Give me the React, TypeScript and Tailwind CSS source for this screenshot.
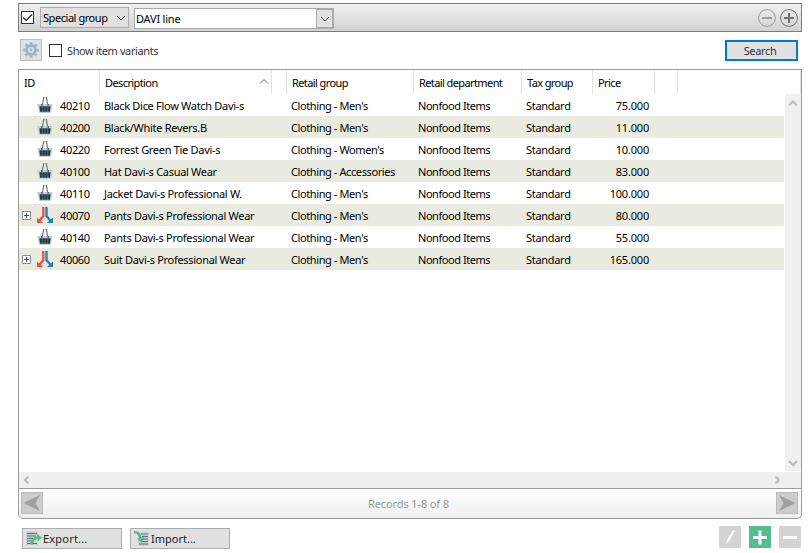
import React from 'react';

type Row = { id: string; name: string; group: string; price: string; variants?: boolean };

const rows: Row[] = [
  { id: '40210', name: 'Black Dice Flow Watch Davi-s', group: "Clothing - Men's", price: '75.000' },
  { id: '40200', name: 'Black/White Revers.B', group: "Clothing - Men's", price: '11.000' },
  { id: '40220', name: 'Forrest Green Tie Davi-s', group: "Clothing - Women's", price: '10.000' },
  { id: '40100', name: 'Hat Davi-s Casual Wear', group: 'Clothing - Accessories', price: '83.000' },
  { id: '40110', name: 'Jacket Davi-s Professional W.', group: "Clothing - Men's", price: '100.000' },
  { id: '40070', name: 'Pants Davi-s Professional Wear', group: "Clothing - Men's", price: '80.000', variants: true },
  { id: '40140', name: 'Pants Davi-s Professional Wear', group: "Clothing - Men's", price: '55.000' },
  { id: '40060', name: 'Suit Davi-s Professional Wear', group: "Clothing - Men's", price: '165.000', variants: true },
];

const Chevron = ({ dir, className }: { dir: 'up' | 'down' | 'left' | 'right'; className: string }) => {
  const d = { up: 'M1 6.5 5 2.5 9 6.5', down: 'M1 3 5 7 9 3', left: 'M6.5 1.5 3 5 6.5 8.5', right: 'M3.5 1.5 7 5 3.5 8.5' }[dir];
  return (
    <svg viewBox="0 0 10 10" className={'block h-[10px] w-[10px] shrink-0 ' + className} fill="none" stroke="currentColor">
      <path d={d} />
    </svg>
  );
};

const Basket = () => (
  <svg viewBox="0 0 16 16" className="block h-4 w-4">
    <path d="M5.3 8.5 6.6 1M10.7 8.5 9.4 1" stroke="#5b686e" strokeWidth="1.1" fill="none" />
    <path d="M6 .6h1.6M8.6.6h1.6" stroke="#6d797f" />
    <path d="M.3 7h15.2v2.2H.3z" fill="#c3cdd2" />
    <path d="M4 7h1.6v2H4zM10.4 7H12v2h-1.6z" fill="#5b686e" />
    <path d="M1 9h14l-1 7H2z" fill="#c3cdd2" />
    <path d="M2.4 9.2h11.2l-.7 5.6H3z" fill="#283a42" />
    <path d="M5.3 9v6M8 9v6M10.7 9v6" stroke="#71828a" strokeWidth=".6" />
  </svg>
);

const Split = () => (
  <svg viewBox="0 0 16 16" className="block h-4 w-4">
    <path d="M6.3 0v9L2.5 13.5" fill="none" stroke="#f04e3e" strokeWidth="2.3" />
    <path d="M0 10.5V16h6z" fill="#f04e3e" />
    <path d="M9.5 0v9l3.8 4.5" fill="none" stroke="#1f80b5" strokeWidth="2.3" />
    <path d="M16 10.5V16h-6z" fill="#1f80b5" />
  </svg>
);

const Gear = () => (
  <svg viewBox="0 0 16 16" className="block h-4 w-4">
    <circle cx="8" cy="8" r="5.9" fill="#a5b0b8" />
    <circle cx="8" cy="8" r="6.7" fill="none" stroke="#a5b0b8" strokeWidth="2.2" strokeDasharray="2.9 2.36" strokeDashoffset="1.45" />
    <circle cx="8" cy="8" r="3" fill="#e1e1e1" />
    <circle cx="8" cy="8" r="1.4" fill="#a5b0b8" />
  </svg>
);

const Doc = ({ out }: { out?: boolean }) => (
  <svg viewBox="0 0 16 15" className="block h-[15px] w-4">
    <path d={out ? 'M0 0h12v14H0z' : 'M4 1h11v14H4z'} fill="#cbd0d2" />
    <path d={out ? 'M1 2.5h10M1 5h9M1 7.5h7M1 10h5M1 12.5h10' : 'M7 3h7M8 5.5h6M9 8h5M7 10.5h7M5 13h9'} stroke="#5c6c75" strokeWidth="1.1" />
    {out ? (
      <>
        <path d="M5.5 13.5C6 9 8 7 12 6.5" fill="none" stroke="#52be8b" strokeWidth="2.5" />
        <path d="m11 3 5 3.5-4 4z" fill="#52be8b" />
      </>
    ) : (
      <>
        <path d="M0 1.3C4 1 6 3 6.5 8" fill="none" stroke="#52be8b" strokeWidth="2.5" />
        <path d="M3 7.5 10 6 8 12.5z" fill="#52be8b" />
      </>
    )}
  </svg>
);

const Check = ({ on }: { on?: boolean }) => (
  <span className="block h-[13px] w-[13px] shrink-0 border border-[#333] bg-white">
    {on && (
      <svg viewBox="0 0 11 11" className="block h-[11px] w-[11px]">
        <path d="M1.2 5.5 4.2 8.5 10 2.5" fill="none" stroke="#222" strokeWidth="1.2" />
      </svg>
    )}
  </span>
);

const Nav = ({ right }: { right?: boolean }) => (
  <span className="block h-[22px] w-[22px] border border-[#bcbcbc] bg-[#cccccc]">
    <svg viewBox="0 0 20 20" className="block h-5 w-5">
      <path d={right ? 'M2 2 18.5 10 2 18 6.5 10z' : 'M18 2 1.5 10 18 18 13.5 10z'} fill="#a0a0a0" />
    </svg>
  </span>
);

const Circle = ({ plus }: { plus?: boolean }) => (
  <svg viewBox="0 0 18 18" className={'block h-[18px] w-[18px] ' + (plus ? 'text-[#707070]' : 'text-[#9c9c9c]')} fill="none" stroke="currentColor">
    <circle cx="9" cy="9" r="8.4" />
    <path d={plus ? 'M4 9h10M9 4v10' : 'M4 9h10'} strokeWidth="2" />
  </svg>
);

const cols = 'grid grid-cols-[81px_172px_15px_127px_108px_71px_62px_23px_123px]';
const heads = ['ID', 'Description', '', 'Retail group', 'Retail department', 'Tax group', 'Price', '', ''];

export default function App() {
  return (
    <div className="h-[553px] w-[810px] overflow-hidden bg-white pt-[3px] pl-[18px] font-['Noto_Sans','Open_Sans',sans-serif] text-[11px] leading-[14px] whitespace-nowrap text-black">
      <div className="flex h-[29px] w-[784px] items-start border border-[#7c7c7c] bg-linear-to-b from-[#f0f0f0] to-[#d2d2d2] pl-[2px]">
        <div className="mt-[7px]"><Check on /></div>
        <div className="mt-[3px] ml-[6px] flex h-[21px] w-[89px] items-center border border-[#adadad] bg-[#e1e1e1] pl-[2px]">
          <span className="w-[73px] tracking-[-0.45px]">Special group</span>
          <Chevron dir="down" className="text-[#444]" />
        </div>
        <div className="mt-[4px] ml-[5px] flex h-[21px] w-[200px] border border-[#aaa] bg-white">
          <span className="flex-1 pt-[3px] pl-[1px] tracking-[-0.2px]">DAVI line</span>
          <span className="flex w-[17px] items-center justify-center border border-[#adadad] bg-[#e1e1e1]">
            <Chevron dir="down" className="text-[#444]" />
          </span>
        </div>
        <div className="mt-[5px] ml-auto flex gap-1 pr-[3px]">
          <Circle />
          <Circle plus />
        </div>
      </div>

      <div className="flex h-[37px] w-[784px] items-start pt-[7px] pl-[2px]">
        <span className="flex h-[22px] w-[22px] items-center justify-center border border-[#bcbcbc] bg-[#e1e1e1]"><Gear /></span>
        <div className="mt-[5px] ml-[7px]"><Check /></div>
        <span className="mt-[5px] ml-[5px] tracking-[-0.4px] text-[#333]">Show item variants</span>
        <button className="mt-px mr-[4px] ml-auto h-[21px] w-[73px] border-2 border-[#0078d7] bg-[#e1e1e1] pr-[3px] tracking-[-0.35px] text-[#333]">Search</button>
      </div>

      <div className="h-[420px] w-[784px] border border-[#9b9b9b]">
        <div className={cols + ' h-6'}>
          {heads.map((h, i) => (
            <div key={i} className="flex items-center justify-between border-r border-[#e0e0e0] pt-[2px] pl-[5px] tracking-[-0.6px]">
              <span>{h}</span>
              {i === 1 && <Chevron dir="up" className="mr-[2px] -mt-[3px] text-[#666]" />}
            </div>
          ))}
        </div>
        <div className="flex h-[378px]">
          <div className="w-[765px]">
            {rows.map((r, i) => (
              <div key={i} className={'flex h-[22px] items-center ' + (i % 2 ? 'bg-[#e9ebe1]' : '')}>
                <span className="w-[18px] pl-[3px]">
                  {r.variants && (
                    <svg viewBox="0 0 9 9" className="block h-[9px] w-[9px]">
                      <path d="M.5.5h8v8h-8z" fill="#fff" stroke="#8f8f8f" />
                      <path d="M2 4.5h5M4.5 2v5" stroke="#34508f" />
                    </svg>
                  )}
                </span>
                <span className="w-[23px]">{r.variants ? <Split /> : <Basket />}</span>
                <span className="w-[44px] pt-[2px] tracking-[-0.35px]">{r.id}</span>
                <span className="w-[187px] pt-[2px] tracking-[-0.3px]">{r.name}</span>
                <span className="w-[127px] pt-[2px] tracking-[-0.4px]">{r.group}</span>
                <span className="w-[108px] pt-[2px] tracking-[-0.45px]">Nonfood Items</span>
                <span className="w-[60px] pt-[2px] tracking-[-0.3px]">Standard</span>
                <span className="w-[63px] pt-[2px] text-right tracking-[-0.2px]">{r.price}</span>
              </div>
            ))}
          </div>
          <div className="ml-[1px] flex h-[377px] w-4 flex-col items-center justify-between bg-[#f0f0f0] pt-[5px] pb-[3px]">
            <Chevron dir="up" className="stroke-2 text-[#bcbcbc]" />
            <Chevron dir="down" className="stroke-2 text-[#bcbcbc]" />
          </div>
        </div>
        <div className="flex h-4 items-center justify-between bg-[#f0f0f0] pr-[19px] pl-[3px]">
          <Chevron dir="left" className="stroke-2 text-[#bcbcbc]" />
          <Chevron dir="right" className="stroke-2 text-[#bcbcbc]" />
        </div>
      </div>

      <div className="flex h-[30px] w-[784px] items-start justify-between rounded-b-[5px] border border-t-0 border-[#9b9b9b] bg-linear-to-b from-white to-[#eeeeee] pt-[3px] pr-[3px] pl-[2px]">
        <Nav />
        <span className="mt-[5px] mr-[2px] tracking-[-0.12px] text-[#999]">Records 1-8 of 8</span>
        <Nav right />
      </div>

      <div className="flex w-[784px] items-start pt-[7px] pl-1 text-[#222]">
        <div className="mt-[2px] flex h-[21px] w-[100px] items-center gap-[1px] border border-[#adadad] bg-[#e1e1e1] pl-[3px] tracking-[0.2px]"><Doc out />Export...</div>
        <div className="mt-[2px] ml-2 flex h-[21px] w-[100px] items-center gap-[1px] border border-[#adadad] bg-[#e1e1e1] pl-[3px]"><Doc />Import...</div>
        <div className="ml-auto flex gap-2 pr-[1px]">
          <svg viewBox="0 0 22 22" className="h-[22px] w-[22px] bg-[#d3d3d3]"><path d="m7 18 1-4 6-10 2 1-6 10z" fill="#fff" /></svg>
          <svg viewBox="0 0 22 22" className="h-[22px] w-[22px] bg-[#54bd8c]"><path d="M4 11.5h14M11 4.5v14" stroke="#fff" strokeWidth="3" /></svg>
          <svg viewBox="0 0 22 22" className="h-[22px] w-[22px] bg-[#d3d3d3]"><path d="M4 11.5h14" stroke="#fff" strokeWidth="3" /></svg>
        </div>
      </div>
    </div>
  );
}
